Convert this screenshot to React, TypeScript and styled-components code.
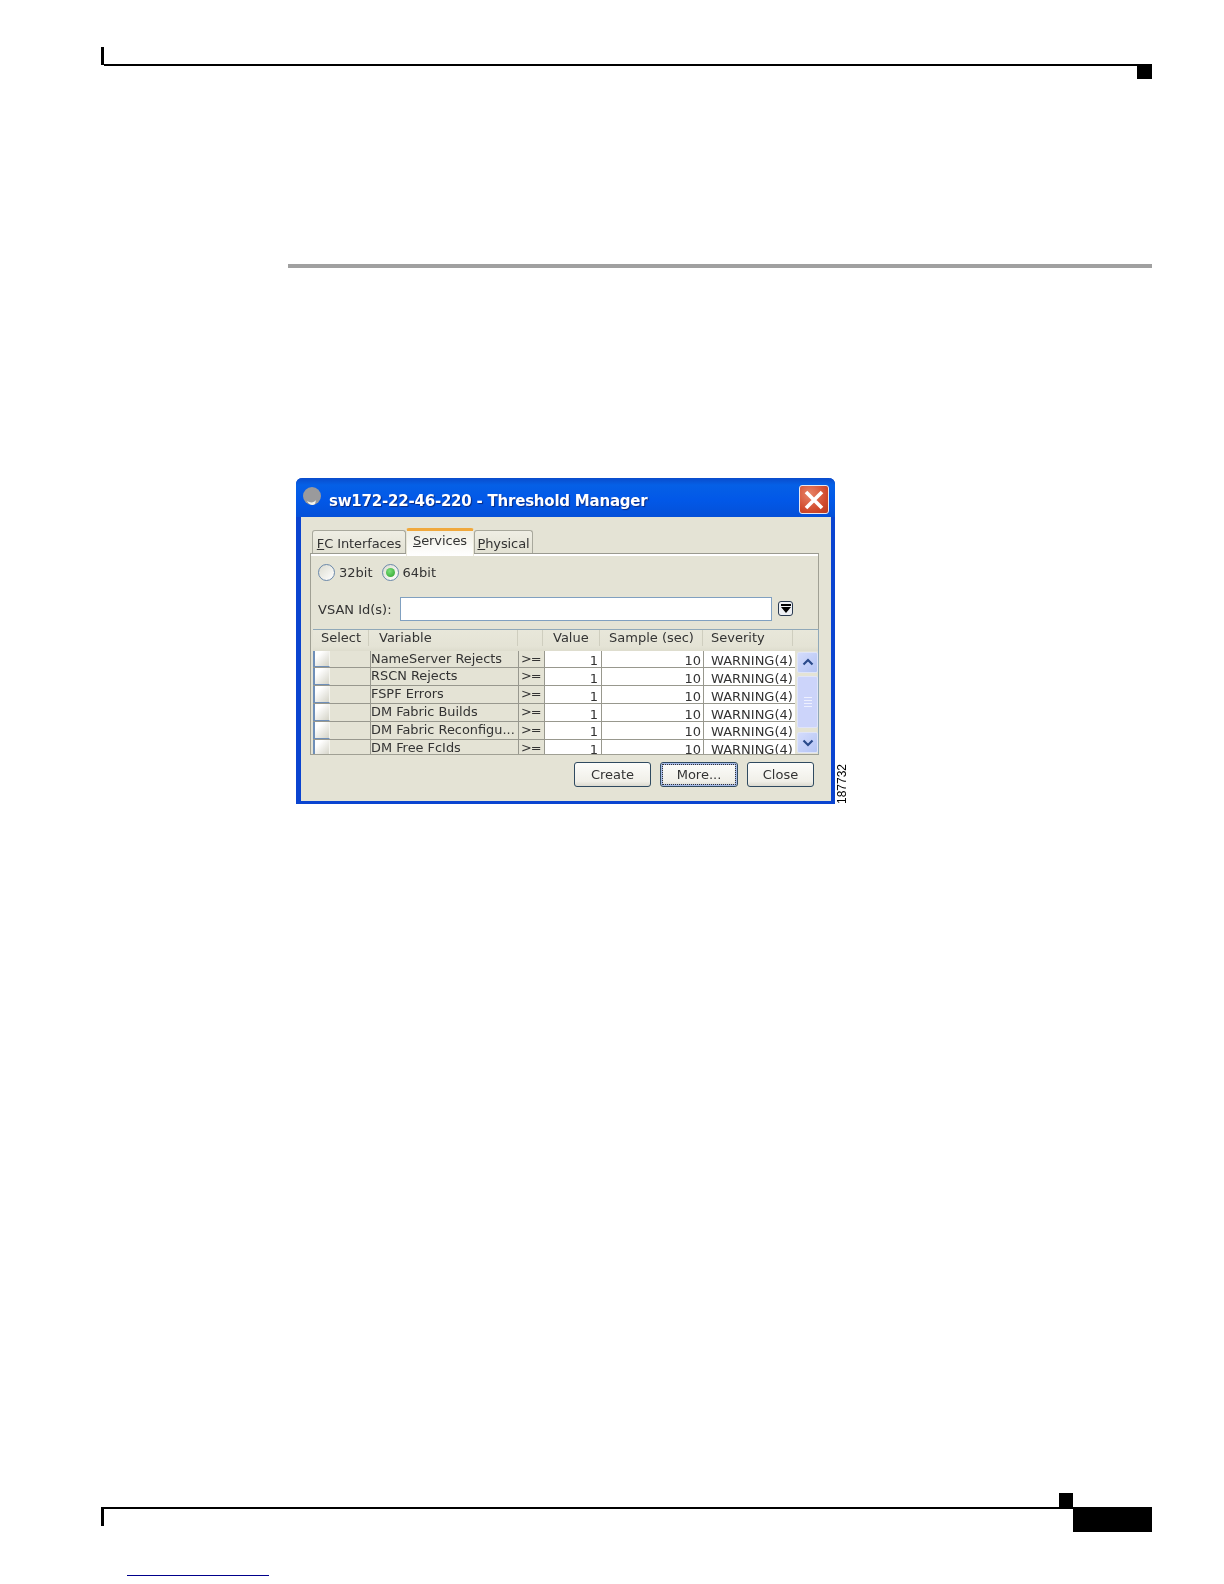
import React from 'react';
import styled, { createGlobalStyle } from 'styled-components';

const GlobalStyle = createGlobalStyle`
  html, body {
    margin: 0;
    padding: 0;
    background: #fff;
  }
`;

const Page = styled.div`
  width: 1224px;
  height: 1584px;
  overflow: hidden;
  box-sizing: border-box;
  padding: 47px 72px 0 101px;
  background: #fff;
  font-family: "DejaVu Sans", sans-serif;
`;

const Header = styled.header`
  display: flex;
  align-items: flex-start;
`;

const HeaderTick = styled.div`
  width: 3px;
  height: 18px;
  background: #000;
`;

const HeaderLine = styled.div`
  flex: 1;
  height: 2px;
  margin-top: 17px;
  background: #000;
`;

const HeaderSquare = styled.div`
  width: 15px;
  height: 15px;
  margin-top: 17px;
  background: #000;
`;

const SectionRule = styled.div`
  height: 4px;
  margin: 185px 0 0 187px;
  background: #a0a0a0;
`;

const Figure = styled.div`
  display: flex;
  align-items: flex-end;
  margin: 210px 0 0 195px;
`;

const FigureNumber = styled.div`
  writing-mode: vertical-rl;
  transform: rotate(180deg);
  margin-left: 1px;
  font-family: "Liberation Sans", Arial, sans-serif;
  font-size: 12px;
  line-height: 12px;
  color: #000;
`;

const Dialog = styled.div`
  width: 539px;
  height: 326px;
  box-sizing: border-box;
  display: flex;
  flex-direction: column;
  border-radius: 6px 6px 0 0;
  border: solid #0a44d0;
  border-width: 0 4px 3px 5px;
  background: #e4e3d5;
  color: #333;
  font-size: 13px;
  filter: blur(0.45px);
`;

const TitleBar = styled.div`
  height: 39px;
  box-sizing: border-box;
  flex: none;
  margin: 0 -4px 0 -5px;
  padding: 7px 6px 0 6px;
  display: flex;
  align-items: center;
  border-radius: 6px 6px 0 0;
  background: linear-gradient(#0a4ccc 0%, #0560e6 18%, #0258e8 55%, #0450d8 100%);
`;

const TitleIcon = styled.svg`
  flex: none;
  margin-top: -8px;
`;

const TitleText = styled.div`
  flex: 1;
  margin-left: 7px;
  font-weight: bold;
  font-size: 15px;
  letter-spacing: -0.22px;
  color: #fff;
  text-shadow: 1px 1px 1px #0a2a80;
  white-space: nowrap;
`;

const CloseButton = styled.div`
  width: 30px;
  height: 29px;
  box-sizing: border-box;
  margin-top: -3px;
  display: flex;
  align-items: center;
  justify-content: center;
  border: 1px solid #e8e8f0;
  border-radius: 3px;
  background: radial-gradient(circle at 35% 30%, #e88468, #d0492c 65%, #b83a20);
`;

const Body = styled.div`
  flex: 1;
  display: flex;
  flex-direction: column;
  padding: 11px 12px 0 9px;
  min-height: 0;
`;

const Tabs = styled.div`
  display: flex;
  align-items: flex-end;
  height: 25px;
  padding-left: 2px;
`;

const Tab = styled.div<{ $active?: boolean; $width: number }>`
  width: ${({ $width }) => $width}px;
  height: ${({ $active }) => ($active ? 28 : 23)}px;
  box-sizing: border-box;
  margin-bottom: ${({ $active }) => ($active ? -3 : 0)}px;
  display: flex;
  justify-content: center;
  padding-top: ${({ $active }) => ($active ? 2 : 5)}px;
  border: 1px solid ${({ $active }) => ($active ? '#e8e6d8' : '#a8a89c')};
  border-top: ${({ $active }) => ($active ? '3px solid #f0a83c' : '1px solid #a8a89c')};
  border-bottom: 0;
  border-radius: 3px 3px 0 0;
  background: ${({ $active }) => ($active ? 'linear-gradient(#f0efe4, #fff)' : 'linear-gradient(#efeee4, #e2e1d3)')};
  position: relative;
  z-index: ${({ $active }) => ($active ? 1 : 0)};
  white-space: nowrap;
  letter-spacing: -0.1px;
`;

const Pane = styled.div`
  height: 202px;
  box-sizing: border-box;
  padding: 5px 0 0 1px;
  border: 1px solid #a0a094;
  border-top: 1px solid #9a9a90;
  box-shadow: inset 0 2px 0 #fff;
  display: flex;
  flex-direction: column;
`;

const RadioRow = styled.div`
  height: 24px;
  margin-top: 2px;
  padding-left: 6px;
  display: flex;
  align-items: center;
`;

const Radio = styled.span<{ $checked?: boolean }>`
  width: 17px;
  height: 17px;
  box-sizing: border-box;
  flex: none;
  display: flex;
  align-items: center;
  justify-content: center;
  margin-right: 4px;
  border: 1.5px solid #6a88aa;
  border-radius: 50%;
  background: linear-gradient(135deg, #dcdcd0, #fff);
`;

const RadioDot = styled.span`
  width: 9px;
  height: 9px;
  border-radius: 50%;
  background: radial-gradient(circle at 40% 35%, #7ce07c, #28a028);
`;

const RadioLabel = styled.span`
  margin-right: 9px;
`;

const VsanRow = styled.div`
  height: 24px;
  margin-top: 12px;
  display: flex;
  align-items: center;
  padding-left: 6px;
`;

const VsanLabel = styled.span`
  width: 82px;
  flex: none;
  padding-top: 2px;
`;

const VsanInput = styled.div`
  width: 372px;
  height: 24px;
  box-sizing: border-box;
  flex: none;
  border: 1px solid #80a0c0;
  background: #fff;
`;

const DropButton = styled.div`
  width: 15px;
  height: 15px;
  box-sizing: border-box;
  margin-left: 6px;
  display: flex;
  align-items: center;
  justify-content: center;
  border: 1px solid #2a3a50;
  border-radius: 3px;
  background: #eef0f4;
`;

const Table = styled.div`
  width: 506px;
  height: 127px;
  margin: 8px 0 0 1px;
  box-sizing: border-box;
  border: solid #90a8b8;
  border-width: 1px 1px 0 0;
  display: flex;
  flex-direction: column;
  overflow: hidden;
`;

const HeaderRow = styled.div`
  height: 21px;
  flex: none;
  display: grid;
  grid-template-columns: 56px 149px 25px 57px 103px 90px 1fr;
  background: linear-gradient(#e8e7da, #e4e3d5 80%, #dddccd);
`;

const HeaderCell = styled.div<{ $pad: number }>`
  padding-left: ${({ $pad }) => $pad}px;
  line-height: 15px;
  border-right: 1px solid #cfcebf;
  margin-bottom: 5px;
  white-space: nowrap;
`;

const TableBody = styled.div`
  flex: 1;
  min-height: 0;
  display: flex;
`;

const Rows = styled.div`
  width: 482px;
  flex: none;
  overflow: hidden;
`;

const Row = styled.div`
  height: 17.8px;
  box-sizing: border-box;
  display: grid;
  grid-template-columns: 58px 148px 26px 57px 102px 91px;
  grid-template-rows: minmax(0, 1fr);
  border-bottom: 1.5px solid #98988e;
`;

const SelectCell = styled.div`
  border-right: 1.5px solid #98988e;
  overflow: hidden;
`;

const Checkbox = styled.div`
  width: 17px;
  height: 100%;
  box-sizing: border-box;
  border: solid #6f8fb8;
  border-width: 0 1px 1px 2px;
  border-right-color: #f4f4ee;
  background: linear-gradient(135deg, #ffffff 25%, #d4d3c7);
`;

const TextCell = styled.div`
  line-height: 15px;
  font-size: 12.9px;
  white-space: nowrap;
  border-right: 1.5px solid #98988e;
`;

const OpCell = styled(TextCell)`
  padding-left: 2px;
  letter-spacing: -1px;
`;

const NumberCell = styled.div<{ $pad: number }>`
  background: #fff;
  text-align: right;
  padding: 4.5px ${({ $pad }) => $pad}px 0 0;
  line-height: 11.8px;
  border-right: 1.5px solid #98988e;
`;

const SeverityCell = styled.div`
  background: #fff;
  padding: 4.5px 0 0 7px;
  line-height: 11.8px;
  white-space: nowrap;
`;

const ScrollBar = styled.div`
  width: 21px;
  flex: none;
  margin: 1px 0 1px 2px;
  display: flex;
  flex-direction: column;
  justify-content: space-between;
`;

const ScrollButton = styled.div`
  height: 21px;
  display: flex;
  align-items: center;
  justify-content: center;
  border: 1px solid #dfe4f8;
  border-radius: 2px;
  box-sizing: border-box;
  background: linear-gradient(135deg, #d4dcfc, #b4c4f4);
`;

const ScrollThumb = styled.div`
  height: 52px;
  box-sizing: border-box;
  display: flex;
  flex-direction: column;
  align-items: center;
  justify-content: center;
  gap: 2px;
  border: 1px solid #e0e4fa;
  border-radius: 2px;
  background: #ccd4fa;
`;

const Grip = styled.span`
  width: 8px;
  height: 1px;
  background: #eef0fe;
`;

const ButtonBar = styled.div`
  display: flex;
  justify-content: flex-end;
  gap: 9px;
  margin: 7px 5px 0 0;
`;

const DialogButton = styled.div<{ $width: number; $focused?: boolean }>`
  width: ${({ $width }) => $width}px;
  height: 25px;
  box-sizing: border-box;
  display: flex;
  align-items: center;
  justify-content: center;
  border: 1px solid #2f4a60;
  border-radius: 3px;
  background: linear-gradient(#fcfcfa, #f0efe8 80%, #dcdad0);
  box-shadow: ${({ $focused }) => ($focused ? 'inset 0 0 0 2px #a8bce8' : 'none')};
  outline: ${({ $focused }) => ($focused ? '1px dotted #333' : 'none')};
  outline-offset: -3px;
`;

const Footer = styled.footer`
  display: flex;
  margin-top: 689px;
`;

const FooterLeft = styled.div`
  flex: 1;
  display: flex;
  flex-direction: column;
`;

const FooterSquare = styled.div`
  width: 14px;
  height: 14px;
  align-self: flex-end;
  background: #000;
`;

const FooterLine = styled.div`
  height: 1.5px;
  background: #000;
`;

const FooterTick = styled.div`
  width: 3px;
  height: 17px;
  background: #000;
`;

const PageNumberBox = styled.div`
  width: 79px;
  height: 25px;
  margin-top: 14px;
  background: #000;
`;

const LinkLine = styled.div`
  width: 142px;
  height: 1px;
  margin: 43px 0 0 26px;
  background: #00008b;
`;

const rows = [
  'NameServer Rejects',
  'RSCN Rejects',
  'FSPF Errors',
  'DM Fabric Builds',
  'DM Fabric Reconfigu...',
  'DM Free FcIds',
];

const App: React.FC = () => {
  return (
    <Page>
      <GlobalStyle />
      <Header>
        <HeaderTick />
        <HeaderLine />
        <HeaderSquare />
      </Header>
      <SectionRule />
      <Figure>
        <Dialog>
          <TitleBar>
            <TitleIcon width="20" height="20" viewBox="0 0 20 20">
              <circle cx="10" cy="9" r="9" fill="#9a9a9c" />
              <path d="M5 14c3 2 7 2 9-1l-1 4c-2 2-6 1-8-3z" fill="#f4f4ee" />
            </TitleIcon>
            <TitleText>sw172-22-46-220 - Threshold Manager</TitleText>
            <CloseButton>
              <svg width="20" height="20" viewBox="0 0 20 20">
                <path d="M2 2l16 16M18 2L2 18" stroke="#fff" strokeWidth="3.6" />
              </svg>
            </CloseButton>
          </TitleBar>
          <Body>
            <Tabs>
              <Tab $width={94}>
                <span><u>F</u>C Interfaces</span>
              </Tab>
              <Tab $active $width={68}>
                <span><u>S</u>ervices</span>
              </Tab>
              <Tab $width={59}>
                <span><u>P</u>hysical</span>
              </Tab>
            </Tabs>
            <Pane>
              <RadioRow>
                <Radio />
                <RadioLabel>32bit</RadioLabel>
                <Radio $checked>
                  <RadioDot />
                </Radio>
                <span>64bit</span>
              </RadioRow>
              <VsanRow>
                <VsanLabel>VSAN Id(s):</VsanLabel>
                <VsanInput />
                <DropButton>
                  <svg width="10" height="9" viewBox="0 0 10 9">
                    <path d="M0 0h10v2H0zM0 3h10L5 9z" fill="#000" />
                  </svg>
                </DropButton>
              </VsanRow>
              <Table>
                <HeaderRow>
                  <HeaderCell $pad={8}>Select</HeaderCell>
                  <HeaderCell $pad={10}>Variable</HeaderCell>
                  <HeaderCell $pad={0} />
                  <HeaderCell $pad={10}>Value</HeaderCell>
                  <HeaderCell $pad={9}>Sample (sec)</HeaderCell>
                  <HeaderCell $pad={8}>Severity</HeaderCell>
                </HeaderRow>
                <TableBody>
                  <Rows>
                    {rows.map((name) => (
                      <Row key={name}>
                        <SelectCell>
                          <Checkbox />
                        </SelectCell>
                        <TextCell>{name}</TextCell>
                        <OpCell>&gt;=</OpCell>
                        <NumberCell $pad={3}>1</NumberCell>
                        <NumberCell $pad={2}>10</NumberCell>
                        <SeverityCell>WARNING(4)</SeverityCell>
                      </Row>
                    ))}
                  </Rows>
                  <ScrollBar>
                    <ScrollButton>
                      <svg width="12" height="8" viewBox="0 0 12 8">
                        <path d="M1.5 6.5L6 2l4.5 4.5" fill="none" stroke="#2a4a8a" strokeWidth="2.2" />
                      </svg>
                    </ScrollButton>
                    <ScrollThumb>
                      <Grip />
                      <Grip />
                      <Grip />
                      <Grip />
                    </ScrollThumb>
                    <ScrollButton>
                      <svg width="12" height="8" viewBox="0 0 12 8">
                        <path d="M1.5 1.5L6 6l4.5-4.5" fill="none" stroke="#2a4a8a" strokeWidth="2.2" />
                      </svg>
                    </ScrollButton>
                  </ScrollBar>
                </TableBody>
              </Table>
            </Pane>
            <ButtonBar>
              <DialogButton $width={77}>Create</DialogButton>
              <DialogButton $width={78} $focused>More...</DialogButton>
              <DialogButton $width={67}>Close</DialogButton>
            </ButtonBar>
          </Body>
        </Dialog>
        <FigureNumber>187732</FigureNumber>
      </Figure>
      <Footer>
        <FooterLeft>
          <FooterSquare />
          <FooterLine />
          <FooterTick />
        </FooterLeft>
        <PageNumberBox />
      </Footer>
      <LinkLine />
    </Page>
  );
};

export default App;
